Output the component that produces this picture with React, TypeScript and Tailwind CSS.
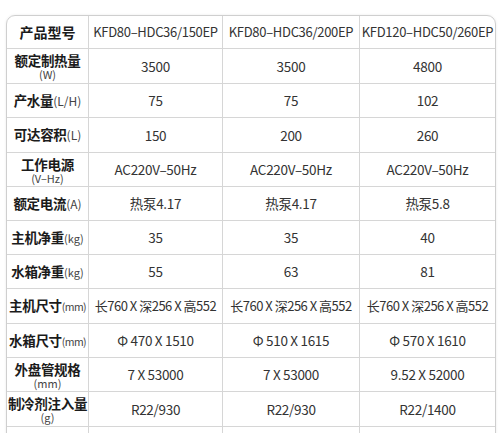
const models = ['KFD80–HDC36/150EP', 'KFD80–HDC36/200EP', 'KFD120–HDC50/260EP'];

type Row = {
  label: string;
  unit?: string;
  stacked?: boolean;
  unitSize?: string;
  valueSize?: string;
  values: string[];
  h: string;
};

const rows: Row[] = [
  { label: '额定制热量', unit: '(W)', stacked: true, values: ['3500', '3500', '4800'], h: 'h-[35px]' },
  { label: '产水量', unit: '(L/H)', values: ['75', '75', '102'], h: 'h-[34px]' },
  { label: '可达容积', unit: '(L)', values: ['150', '200', '260'], h: 'h-[35px]' },
  { label: '工作电源', unit: '(V–Hz)', stacked: true, values: ['AC220V–50Hz', 'AC220V–50Hz', 'AC220V–50Hz'], h: 'h-[34px]' },
  { label: '额定电流', unit: '(A)', values: ['热泵4.17', '热泵4.17', '热泵5.8'], h: 'h-[34px]' },
  { label: '主机净重', unit: '(kg)', unitSize: 'text-[11px]', values: ['35', '35', '40'], h: 'h-[34px]' },
  { label: '水箱净重', unit: '(kg)', unitSize: 'text-[11px]', values: ['55', '63', '81'], h: 'h-[34px]' },
  {
    label: '主机尺寸',
    unit: '(mm)',
    unitSize: 'text-[10.5px] tracking-[-0.6px]',
    valueSize: 'text-[13px] tracking-[-0.5px]',
    values: ['长760 X 深256 X 高552', '长760 X 深256 X 高552', '长760 X 深256 X 高552'],
    h: 'h-[35px]',
  },
  {
    label: '水箱尺寸',
    unit: '(mm)',
    unitSize: 'text-[10.5px] tracking-[-0.6px]',
    values: ['Φ 470 X 1510', 'Φ 510 X 1615', 'Φ 570 X 1610'],
    h: 'h-[34px]',
  },
  { label: '外盘管规格', unit: '(mm)', stacked: true, values: ['7 X 53000', '7 X 53000', '9.52 X 52000'], h: 'h-[34px]' },
  { label: '制冷剂注入量', unit: '(g)', stacked: true, values: ['R22/930', 'R22/930', 'R22/1400'], h: 'h-[35px]' },
];

const widths = ['w-[134px]', 'w-[137px]', 'w-[135px]'];
const font = { fontFamily: '"Noto Sans CJK SC", "Noto Sans", sans-serif' };

function Label({ row }: { row: Row }) {
  if (row.stacked) {
    return (
      <div className="flex flex-col items-center">
        <span className="text-[13.5px] leading-[16px] font-bold text-[#1b1b1b] tracking-[-0.3px]">{row.label}</span>
        <span className="text-[11px] leading-[12px] text-[#444]">{row.unit}</span>
      </div>
    );
  }
  return (
    <div className="flex items-baseline whitespace-nowrap leading-none">
      <span className="text-[13.5px] font-bold text-[#1b1b1b] tracking-[-0.3px]">{row.label}</span>
      <span className={`${row.unitSize ?? 'text-[12px]'} text-[#444]`}>{row.unit}</span>
    </div>
  );
}

export default function App() {
  return (
    <div className="w-[500px] h-[433px] overflow-hidden bg-white pt-[15px] pl-[6px]" style={font}>
      <div className="w-[490px] border border-[#cfcfcf] rounded-t-[9px] shadow-[0_0_3px_rgba(0,0,0,0.08)]">
        <div className="flex h-[33px] border-b border-[#d6d6d6]">
          <div className="w-[82px] border-r border-[#d6d6d6] flex items-center justify-center">
            <span className="text-[14px] font-bold text-[#1b1b1b]">产品型号</span>
          </div>
          {models.map((m, i) => (
            <div
              key={m}
              className={`${widths[i]} ${i < 2 ? 'border-r border-[#d6d6d6]' : ''} flex items-center justify-center text-[13px] text-[#333] tracking-[-0.3px] whitespace-nowrap`}
            >
              {m}
            </div>
          ))}
        </div>
        {rows.map((row) => (
          <div key={row.label} className={`flex ${row.h} border-b border-[#d6d6d6]`}>
            <div className="w-[82px] border-r border-[#d6d6d6] flex items-center justify-center">
              <Label row={row} />
            </div>
            {row.values.map((v, i) => (
              <div
                key={i}
                className={`${widths[i]} ${i < 2 ? 'border-r border-[#d6d6d6]' : ''} flex items-center justify-center ${row.valueSize ?? 'text-[13.5px] tracking-[-0.3px]'} text-[#333] whitespace-nowrap`}
              >
                {v}
              </div>
            ))}
          </div>
        ))}
        <div className="flex h-[80px]">
          <div className="w-[82px] border-r border-[#d6d6d6] flex items-center justify-center">
            <span className="text-[13.5px] font-bold text-[#1b1b1b]">工作环境</span>
          </div>
          {[0, 1, 2].map((i) => (
            <div
              key={i}
              className={`${widths[i]} ${i < 2 ? 'border-r border-[#d6d6d6]' : ''} flex flex-col items-center pt-[3px] text-[13.5px] text-[#333] tracking-[-0.3px] leading-[18px]`}
            >
              <span>热泵工作: 0℃~43℃</span>
              <span>电辅热: -20℃~43℃</span>
            </div>
          ))}
        </div>
      </div>
    </div>
  );
}
